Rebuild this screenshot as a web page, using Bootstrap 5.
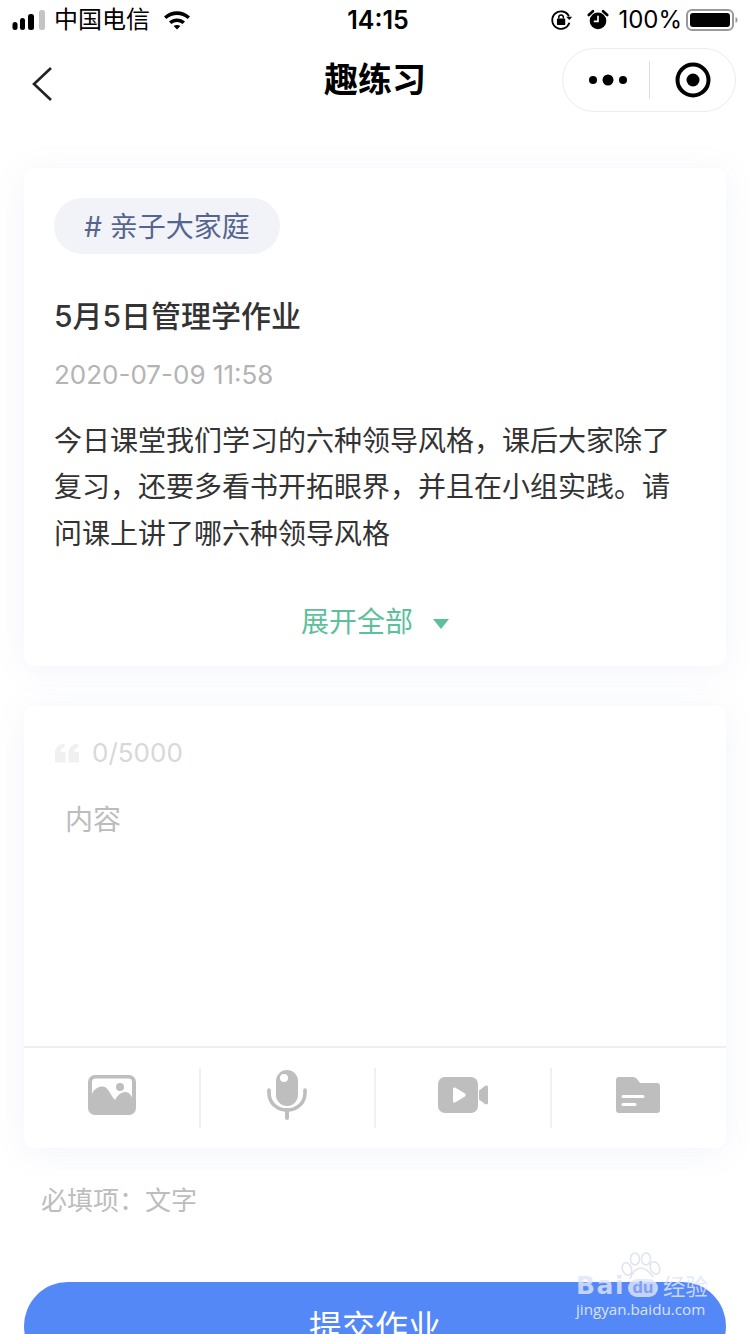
<!DOCTYPE html>
<html lang="zh-CN">
<head>
<meta charset="utf-8">
<title>趣练习</title>
<link href="https://cdn.jsdelivr.net/npm/bootstrap@5.3.0/dist/css/bootstrap.min.css" rel="stylesheet">
<style>
html, body { height: 1334px; overflow: hidden; background: #fff; }
body { width: 750px; position: relative; font-family: Inter, "Noto Sans CJK SC", sans-serif; color: #333; }
.status-row { height: 40px; padding: 0 12px; color: #000; font-size: 24px; line-height: 40px; }
.status-time { font-weight: 600; font-size: 25px; margin-left: 6px; }
.status-side { width: 290px; }
.wifi-ico { margin-left: 13px; }
.alarm-ico { margin-left: 12px; }
.head-row { height: 88px; padding: 0 14px 0 32px; }
.head-side { width: 156px; padding-top: 26px; }
.head-title { font-size: 34px; font-weight: 700; color: #000; line-height: 80px; }
.capsule { width: 174px; height: 64px; border: 1px solid #ececec; border-radius: 32px; }
.capsule-sep { width: 1px; height: 38px; background: #ddd; }
.capsule-more { width: 86px; padding-left: 4px; }
.capsule-close { width: 85px; }
.sheet { margin: 0 24px; background: #fff; border-radius: 10px; box-shadow: 0 4px 32px rgba(110, 130, 200, .09); }
.sheet-task { margin-top: 40px; height: 498px; padding: 30px 30px 0; }
.sheet-answer { margin-top: 40px; height: 442px; }
.topic-pill { height: 56px; width: 226px; background: #f1f3f8; border-radius: 28px; color: #56658f; font-size: 28px; line-height: 58px; text-align: center; }
.task-name { margin-top: 42px; font-size: 30px; font-weight: 500; line-height: 40px; color: #333; }
.task-date { margin-top: 20px; font-size: 26px; line-height: 38px; color: #b4b4b4; }
.task-body { margin-top: 23.500px; font-size: 28px; line-height: 46.500px; color: #333; }
.expand-row { margin-top: 44.500px; font-size: 28px; line-height: 40px; color: #5bc09b; }
.expand-arrow { width: 0; height: 0; margin-left: 20px; margin-top: 4px; border-left: 8px solid transparent; border-right: 8px solid transparent; border-top: 10px solid #5bc09b; }
.answer-input { height: 342px; padding: 27px 30px 0; border-bottom: 2px solid #efefef; }
.count-line { font-size: 26px; line-height: 40px; color: #d8d8d8; }
.quote-ico { margin-right: 13px; }
.input-hint { margin: 27px 0 0 11px; font-size: 28px; line-height: 40px; color: #bcbcbc; }
.tool-row { height: 100px; }
.tool-cell { height: 60px; padding-bottom: 6px; flex: 0 0 176px; }
.tool-cell:nth-child(1) { flex-basis: 174.500px; padding-left: 2px; }
.tool-cell:nth-child(2) { flex-basis: 175px; }
.tool-cell:nth-child(4) { flex-basis: 176.500px; padding-right: 2px; }
.tool-cell + .tool-cell { border-left: 2px solid #f0f0f0; }
.req-note { margin: 33px 0 0 41px; font-size: 26px; line-height: 40px; color: #bdbdbd; }
.submit-btn { display: block; width: 702px; height: 88px; margin: 61px 0 0 24px; background: #5588f7; border: 0; border-radius: 44px; color: #fff; font-size: 33px; line-height: 88px; }
.brand-mark { position: absolute; left: 576px; top: 1252px; width: 136px; height: 74px; }
.brand-top { position: absolute; left: 0; top: 21px; font-family: "DejaVu Sans", sans-serif; font-size: 25px; font-weight: 700; line-height: 26px; letter-spacing: 1.500px; white-space: nowrap; color: rgba(222, 229, 248, .82); }
.brand-pill { position: absolute; left: 52px; top: 27px; width: 30px; height: 18px; border-radius: 9px; background: rgba(222, 229, 248, .82); color: #7d9ef5; font-family: "Liberation Sans", sans-serif; font-size: 17px; font-weight: 700; line-height: 17px; text-align: center; }
.brand-jing { position: absolute; left: 87px; top: 22px; font-size: 22.500px; line-height: 26px; white-space: nowrap; color: rgba(222, 229, 248, .85); }
.brand-url { position: absolute; left: 0; top: 47px; font-size: 15.200px; line-height: 20px; white-space: nowrap; font-family: "Open Sans", sans-serif; color: rgba(255, 255, 255, .78); }
.brand-paw { position: absolute; left: 44px; top: 0; }
</style>
</head>
<body>
<!-- status bar -->
<div class="status-row d-flex align-items-center justify-content-between">
  <div class="status-side d-flex align-items-center">
    <svg width="34" height="20" viewBox="0 0 34 20"><g fill="#000"><rect x="0.500" y="12" width="5" height="8" rx="2.500"/><rect x="8" y="8" width="5" height="12" rx="2.500"/><rect x="16" y="4" width="6" height="16" rx="2.500"/></g><rect x="27" y="0" width="6" height="20" rx="2.500" fill="#c4c4c4"/></svg>
    <span class="ms-2">中国电信</span>
    <svg class="wifi-ico" width="28" height="20" viewBox="0 0 28 20"><path d="M1 6.500C8.500-.5 19.500-.5 27 6.500l-2.300 2.500C18.500 3.500 9.500 3.500 3.300 9zM6 11.500c4.700-4 11.300-4 16 0l-2.400 2.500c-3.400-2.700-7.800-2.700-11.200 0zM10.600 16c2-1.500 4.800-1.500 6.800 0L14 19.500z" fill="#000"/></svg>
  </div>
  <div class="status-time">14:15</div>
  <div class="status-side d-flex align-items-center justify-content-end">
    <svg width="24" height="24" viewBox="0 0 26 24"><path d="M20.500 8A9.500 9.500 0 1 0 21 15" fill="none" stroke="#000" stroke-width="2"/><path d="M17.500 8.500h6.500l-3 3.500z" fill="#000"/><rect x="7.500" y="10.500" width="9" height="7" rx="1" fill="#000"/><path d="M9.500 10.500V9a2.500 2.500 0 0 1 5 0v1.500" fill="none" stroke="#000" stroke-width="1.600"/></svg>
    <svg class="alarm-ico" width="24" height="24" viewBox="0 0 26 24"><circle cx="13" cy="13" r="9" fill="#000"/><path d="M13 7.500V13.500H8.500" fill="none" stroke="#fff" stroke-width="1.800"/><path d="M3 6.500 7.500 2.500M23 6.500 18.500 2.500" stroke="#000" stroke-width="3" stroke-linecap="round"/></svg>
    <span class="ms-2">100%</span>
    <svg class="ms-1" width="52" height="22" viewBox="0 0 52 22"><rect x="1" y="1" width="46" height="20" rx="5" fill="none" stroke="#999" stroke-width="2"/><rect x="4" y="4" width="40" height="14" rx="3" fill="#000"/><path d="M49.500 8c1.500.5 2 1.700 2 3s-.5 2.500-2 3z" fill="#999"/></svg>
  </div>
</div>

<!-- page header -->
<div class="head-row d-flex align-items-start justify-content-between">
  <div class="head-side">
    <svg width="22" height="36" viewBox="0 0 22 36" class="d-block"><path d="M19 2 2 18l17 16" fill="none" stroke="#222" stroke-width="2.600"/></svg>
  </div>
  <div class="head-title">趣练习</div>
  <div class="capsule d-flex align-items-center mt-2">
    <div class="capsule-more d-flex justify-content-center">
      <svg width="38" height="14" viewBox="0 0 38 14"><circle cx="4" cy="7" r="4" fill="#000"/><circle cx="19" cy="7" r="5.500" fill="#000"/><circle cx="34" cy="7" r="4" fill="#000"/></svg>
    </div>
    <div class="capsule-sep"></div>
    <div class="capsule-close d-flex justify-content-center">
      <svg width="36" height="36" viewBox="0 0 36 36"><circle cx="18" cy="18" r="15.500" fill="none" stroke="#000" stroke-width="4"/><circle cx="18" cy="18" r="6.500" fill="#000"/></svg>
    </div>
  </div>
</div>

<!-- assignment card -->
<div class="sheet sheet-task">
  <div class="topic-pill"># 亲子大家庭</div>
  <div class="task-name">5月5日管理学作业</div>
  <div class="task-date">2020-07-09 11:58</div>
  <div class="task-body">今日课堂我们学习的六种领导风格，课后大家除了复习，还要多看书开拓眼界，并且在小组实践。请问课上讲了哪六种领导风格</div>
  <div class="expand-row d-flex align-items-center justify-content-center">展开全部<span class="expand-arrow"></span></div>
</div>

<!-- answer card -->
<div class="sheet sheet-answer">
  <div class="answer-input">
    <div class="count-line d-flex align-items-center">
      <svg width="25" height="20" viewBox="0 0 26 20" class="quote-ico"><path d="M1 20V10C1 5 4 1 11 0v4C8 5 7 7 7 9h5v11zM15 20V10c0-5 3-9 10-10v4c-3 1-4 3-4 5h5v11z" fill="#f0f0f0"/></svg>
      <span>0/5000</span>
    </div>
    <div class="input-hint">内容</div>
  </div>
  <div class="tool-row d-flex align-items-center">
    <div class="tool-cell d-flex align-items-center justify-content-center">
      <svg width="48" height="40" viewBox="0 0 48 40"><path fill-rule="evenodd" d="M7 0h34a7 7 0 0 1 7 7v26a7 7 0 0 1-7 7H7a7 7 0 0 1-7-7V7a7 7 0 0 1 7-7zM4 19c2-5 6-7.500 11-7.500 5 0 8 9.500 12 13.500 2-4 6-8 10-8 3 0 6 2 7 6V7a3.500 3.500 0 0 0-3.500-3.500h-33A3.500 3.500 0 0 0 4 7z" fill="#bebebe"/><circle cx="32" cy="12" r="4" fill="#bebebe"/></svg>
    </div>
    <div class="tool-cell d-flex align-items-center justify-content-center">
      <svg width="40" height="50" viewBox="0 0 40 50"><rect x="9" y="0" width="22" height="36" rx="11" fill="#bebebe"/><circle cx="17" cy="8" r="4" fill="#fff"/><path d="M2 20v3c0 10 8 17 18 17s18-7 18-17v-3" fill="none" stroke="#bebebe" stroke-width="3.600" stroke-linecap="round"/><path d="M20 40v8" stroke="#bebebe" stroke-width="4" stroke-linecap="round"/></svg>
    </div>
    <div class="tool-cell d-flex align-items-center justify-content-center">
      <svg width="50" height="36" viewBox="0 0 50 36"><path fill-rule="evenodd" d="M7 0h26a7 7 0 0 1 7 7v22a7 7 0 0 1-7 7H7a7 7 0 0 1-7-7V7a7 7 0 0 1 7-7zM15 12v12c0 1.500 1 2 2.500 1.300L27 19.500c1-.8 1-2.200 0-3l-9.500-5.800C16 10 15 10.500 15 12z" fill="#bebebe"/><path d="M41 13.500 47 9c1.500-1 3-.5 3 1.500v15c0 2-1.500 2.500-3 1.500l-6-4.500z" fill="#bebebe"/></svg>
    </div>
    <div class="tool-cell d-flex align-items-center justify-content-center">
      <svg width="44" height="36" viewBox="0 0 44 36"><path fill-rule="evenodd" d="M3 0h14c2 0 3 1 4 2l3 4h17a3 3 0 0 1 3 3v24a3 3 0 0 1-3 3H3a3 3 0 0 1-3-3V3a3 3 0 0 1 3-3zM7 18a1.500 1.500 0 0 0 0 3h20a1.500 1.500 0 0 0 0-3zm0 8a1.500 1.500 0 0 0 0 3h12a1.500 1.500 0 0 0 0-3z" fill="#bebebe"/></svg>
    </div>
  </div>
</div>

<div class="req-note">必填项：文字</div>
<button class="submit-btn" type="button">提交作业</button>

<!-- site mark in the lower corner -->
<div class="brand-mark">
  <svg class="brand-paw" width="42" height="30" viewBox="0 0 42 30"><g fill="none" stroke="rgba(214,220,236,.8)" stroke-width="1.500"><ellipse cx="7" cy="17" rx="4.500" ry="6.500" transform="rotate(-20 7 17)"/><ellipse cx="15" cy="7" rx="4.500" ry="6"/><ellipse cx="26" cy="7" rx="4.500" ry="6"/><ellipse cx="35" cy="16" rx="4.500" ry="6.500" transform="rotate(-20 35 16)"/><path d="M10 27c2-7 7-11 11-11s9 4 12 9"/></g></svg>
  <div class="brand-top">Bai</div>
  <div class="brand-pill">du</div>
  <div class="brand-jing">经验</div>
  <div class="brand-url">jingyan.baidu.com</div>
</div>
</body>
</html>
